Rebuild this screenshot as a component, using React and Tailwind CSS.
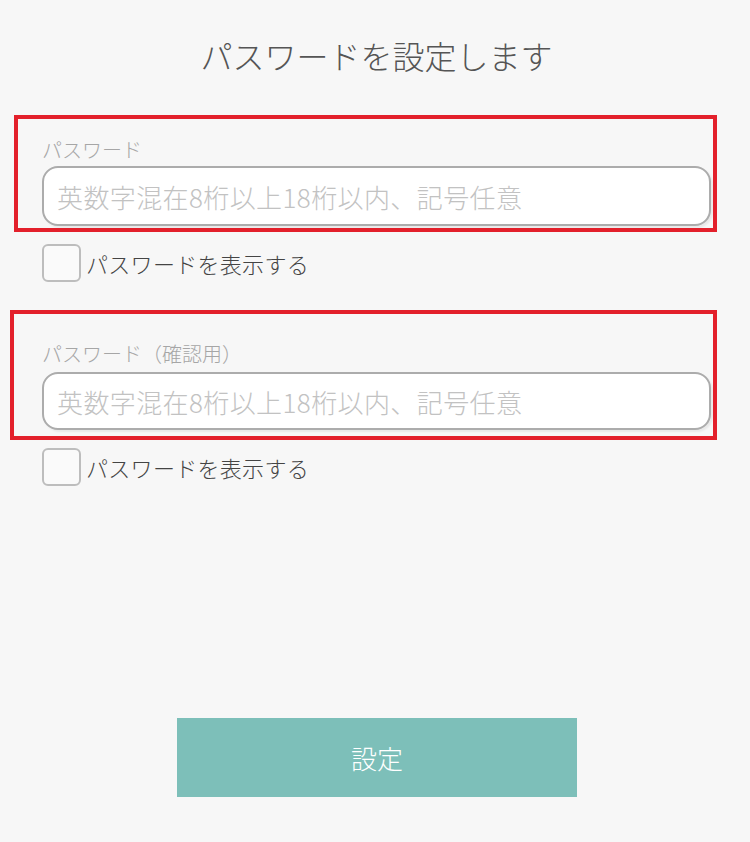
import React, { useState } from 'react';

const font = { fontFamily: '"Noto Sans CJK JP", "Noto Sans", sans-serif' };

function PasswordField({ label, boxClass, inputClass, checkClass }) {
  const [show, setShow] = useState(false);

  return (
    <div>
      <div className="relative">
        <label className="block text-[20px] leading-[24px] text-[#a6a6a6] font-light">{label}</label>
        <input
          type={show ? 'text' : 'password'}
          placeholder="英数字混在8桁以上18桁以内、記号任意"
          className={`block w-full bg-white border-2 border-[#acacac] rounded-[16px] pl-[13px] text-[26px] font-light tracking-[0.4px] text-[#555] placeholder:text-[#c2c2c2] outline-none shadow-[2px_2px_2px_rgba(0,0,0,0.06)] ${inputClass}`}
        />
        {/* annotation frame */}
        <div className={`absolute border-4 border-[#e3202b] pointer-events-none ${boxClass}`} />
      </div>
      <label className={`flex items-center gap-[5px] cursor-pointer ${checkClass}`}>
        <span
          onClick={() => setShow(!show)}
          className="w-[39px] h-[38px] rounded-[6px] border-2 border-[#bdbdbd] bg-[#fafafa] flex items-center justify-center text-[#7dbfb9]"
        >
          {show ? '✓' : ''}
        </span>
        <span className="text-[22px] leading-[30px] text-[#444] font-light tracking-[0.3px]">パスワードを表示する</span>
      </label>
    </div>
  );
}

export default function App() {
  return (
    <div className="min-h-[842px] bg-[#f7f7f7] pb-[45px]" style={font}>
      <h1 className="pt-[35px] pl-[3px] text-center text-[32px] leading-[40px] text-[#555] font-light">
        パスワードを設定します
      </h1>

      <div className="pl-[42px] pr-[39px]">
        <div className="mt-[63px]">
          <PasswordField
            label="パスワード"
            inputClass="mt-[4px] h-[60px]"
            boxClass="top-[-23px] left-[-28px] right-[-6px] bottom-[-6px]"
            checkClass="mt-[18px]"
          />
        </div>

        <div className="mt-[60px]">
          <PasswordField
            label="パスワード（確認用）"
            inputClass="mt-[6px] h-[58px]"
            boxClass="top-[-32px] left-[-32px] right-[-6px] bottom-[-10px]"
            checkClass="mt-[18px]"
          />
        </div>
      </div>

      <div className="mt-[232px] pl-[4px] flex justify-center">
        <button className="w-[400px] h-[79px] bg-[#7dbfb9] text-white text-[26px] font-light">設定</button>
      </div>
    </div>
  );
}
